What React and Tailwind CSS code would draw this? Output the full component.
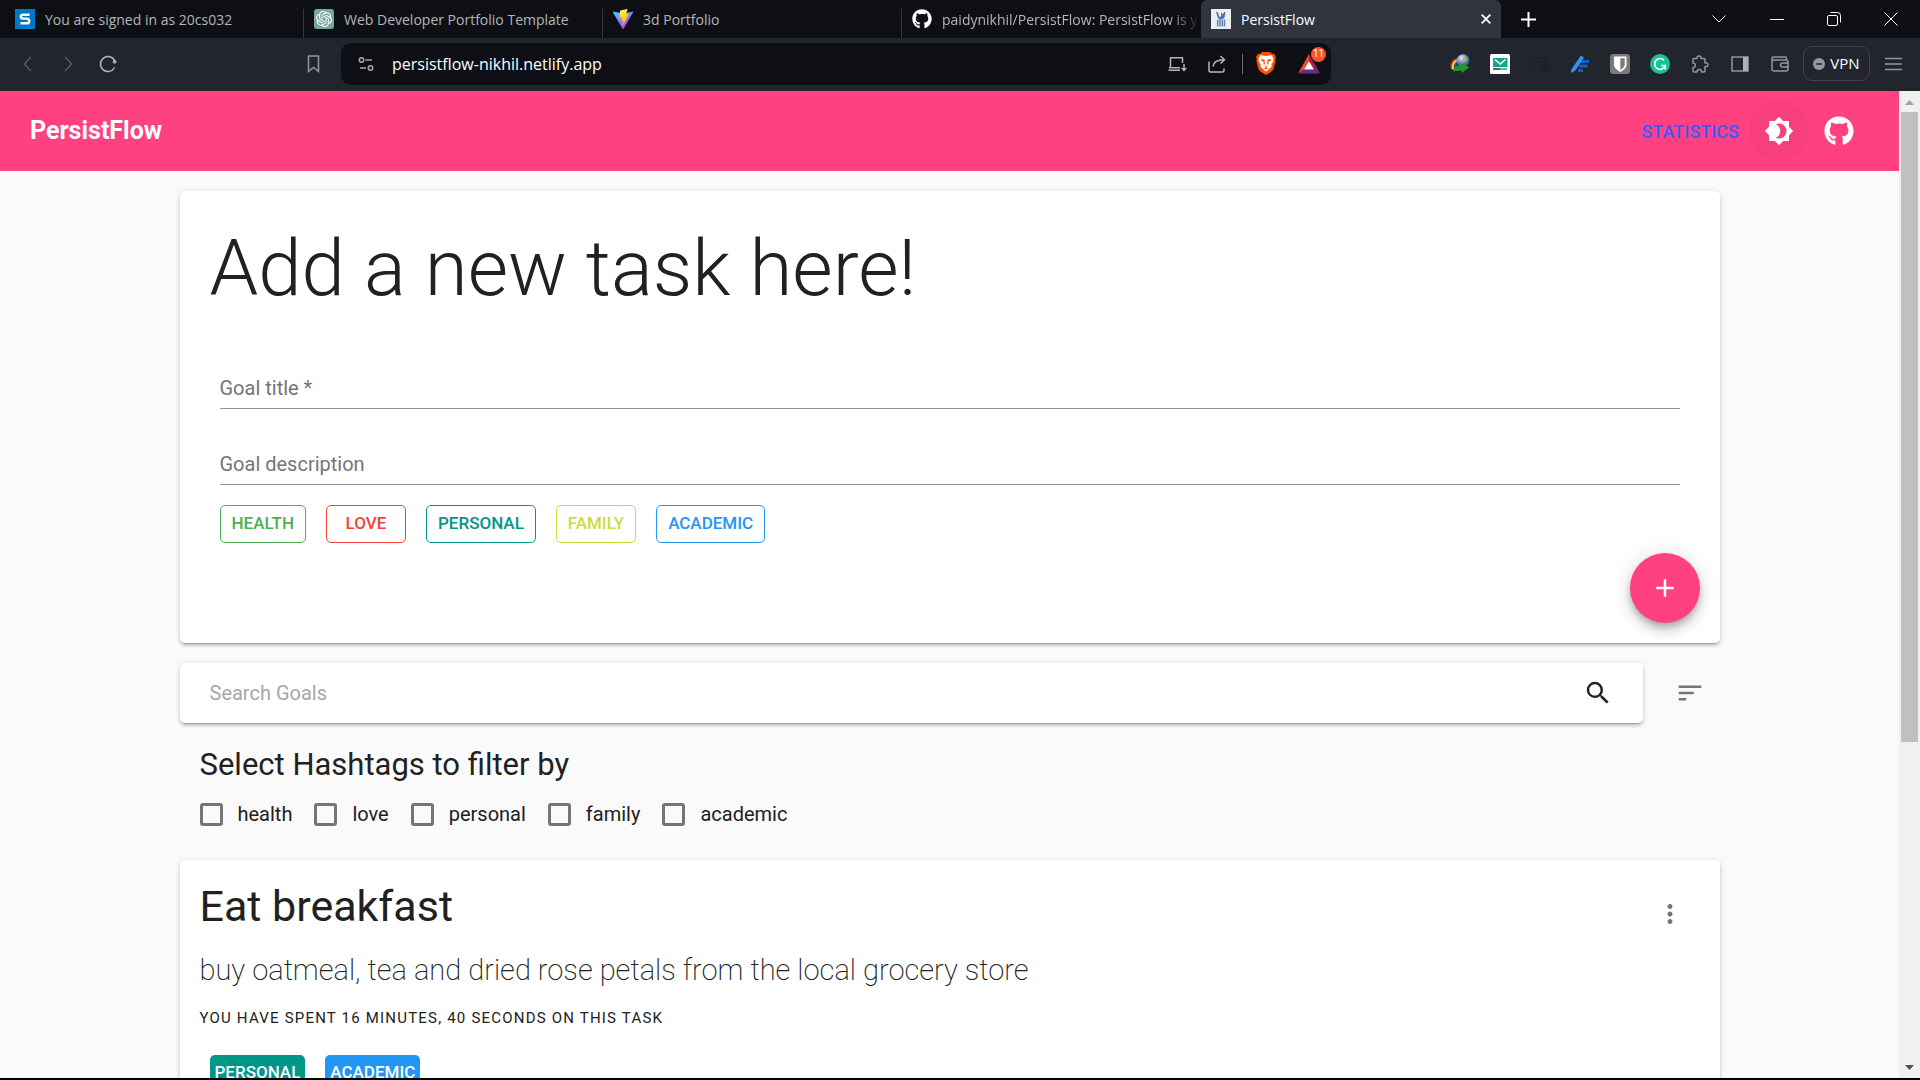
import React from "react";
import { FaGithub } from "react-icons/fa";
import { SiOpenai } from "react-icons/si";
import {
  MdAdd,
  MdBrightness4,
  MdMoreVert,
  MdSearch,
  MdSort,
} from "react-icons/md";

const ui = "font-['Open_Sans','Noto_Sans',sans-serif]";

function Vite() {
  return (
    <svg viewBox="0 0 32 32" className="size-5 shrink-0" aria-hidden="true">
      <defs>
        <linearGradient id="vite-a" x1="0" y1="0" x2="0.6" y2="1">
          <stop offset="0" stopColor="#41d1ff" />
          <stop offset="1" stopColor="#bd34fe" />
        </linearGradient>
        <linearGradient id="vite-b" x1="0.4" y1="0" x2="0.6" y2="1">
          <stop offset="0" stopColor="#ffea83" />
          <stop offset="0.3" stopColor="#ffdd35" />
          <stop offset="1" stopColor="#ffa800" />
        </linearGradient>
      </defs>
      <path fill="url(#vite-a)" d="M31.9 5.6 16.9 31.4a1 1 0 0 1-1.7 0L.1 5.6A1 1 0 0 1 1.1 4.2L16 6.8l14.9-2.6a1 1 0 0 1 1 1.4z" />
      <path fill="url(#vite-b)" d="M22.6.1 11.5 2.300a.4.4 0 0 0-.3.4l-.7 11.500a.4.4 0 0 0 .5.4l3.100-.7a.4.4 0 0 1 .5.5l-.9 4.500a.4.4 0 0 0 .5.5l1.900-.6a.4.4 0 0 1 .5.5l-1.500 7.100c-.1.4.5.7.8.3l.2-.2 9-18a.4.4 0 0 0-.4-.6l-3.200.6a.4.4 0 0 1-.4-.5l2.100-7.200a.4.4 0 0 0-.5-.5z" />
    </svg>
  );
}

const tabs = [
  {
    title: "You are signed in as 20cs032",
    icon: (
      <svg viewBox="0 0 20 20" className="size-5 shrink-0" aria-hidden="true">
        <path fill="#0078c8" d="M0 0h20v20H0z" />
        <path fill="none" stroke="#fff" strokeWidth="2.4" d="M14.5 5.700H8.200C6 5.700 5.800 7 5.800 7.600c0 1.500.8 2 2.200 2h4c1.500 0 2.200.8 2.200 2.300s-.8 2.400-2.400 2.400H5.500" />
      </svg>
    ),
  },
  {
    title: "Web Developer Portfolio Template",
    icon: (
      <span className="grid size-5 shrink-0 place-items-center rounded-[3px] bg-[#75a99c] text-white">
        <SiOpenai size={16} />
      </span>
    ),
  },
  { title: "3d Portfolio", icon: <Vite /> },
  {
    title: "paidynikhil/PersistFlow: PersistFlow is y",
    fade: true,
    icon: <FaGithub size={20} className="shrink-0 text-white" />,
  },
];

function Tab({ title, icon, fade }) {
  return (
    <button type="button" role="tab" className="flex h-full max-w-[299px] min-w-0 flex-1 items-center gap-[10px] pl-[10px] text-[#b4b5b8]">
      {icon}
      <span className={fade
        ? "min-w-0 flex-1 overflow-hidden text-left whitespace-nowrap [mask-image:linear-gradient(to_right,#000_88%,transparent)]"
        : "min-w-0 flex-1 overflow-hidden text-left whitespace-nowrap"}>
        {title}
      </span>
      <span className={fade ? "hidden" : "mt-[9px] w-px self-stretch bg-[#36373c]"} />
    </button>
  );
}

function TabStrip() {
  return (
    <div className={`${ui} flex h-[38px] items-stretch bg-[#0e0f14] pl-[5px] text-[14px]`}>
      <div role="tablist" className="flex min-w-0 flex-1">
        {tabs.map((t) => (
          <Tab key={t.title} {...t} />
        ))}
        <div className="flex h-full max-w-[300px] min-w-0 flex-1 items-center gap-[10px] rounded-t-md bg-[#30343d] px-[10px] text-white">
          <button type="button" role="tab" aria-selected="true" className="flex min-w-0 flex-1 items-center gap-[10px]">
            <svg viewBox="0 0 20 20" className="size-5 shrink-0" aria-hidden="true">
              <path fill="#eceff1" d="M0 0h20v20H0z" />
              <path fill="#4b74ac" d="M5 2.500l2 1 1.500 5L10 7V3l1.500 2.500L13.500 2.500l1 1-1 5-2 2H8L6.500 8z" />
              <path stroke="#5e84b6" strokeWidth="1.500" d="M6.700 10.500V17.500M9 11v6.500M11.300 11v6.500M13.500 10.500V17.500" />
            </svg>
            PersistFlow
          </button>
          <button type="button" aria-label="Close tab">
            <svg viewBox="0 0 10 10" className="size-[10px]" aria-hidden="true">
              <path d="M.7.7l8.600 8.600M9.300.7.7 9.300" stroke="#fff" strokeWidth="1.800" />
            </svg>
          </button>
        </div>
        <button type="button" aria-label="New tab" className="ml-5">
          <svg viewBox="0 0 15 15" className="size-[15px]" aria-hidden="true">
            <path d="M7.500 0v15M0 7.500h15" stroke="#fff" strokeWidth="2" />
          </svg>
        </button>
      </div>
      <div className="flex items-center text-white">
        <button type="button" aria-label="Search tabs" className="grid w-[58px] place-items-center">
          <svg viewBox="0 0 14 14" className="size-[14px]" fill="none" stroke="currentColor" aria-hidden="true">
            <path d="M.5 3.500 7 10l6.500-6.500" />
          </svg>
        </button>
        <button type="button" aria-label="Minimize" className="grid w-[57px] place-items-center">
          <svg viewBox="0 0 14 14" className="size-[14px]" aria-hidden="true">
            <path d="M0 7.500h14" stroke="currentColor" />
          </svg>
        </button>
        <button type="button" aria-label="Restore" className="grid w-[57px] place-items-center">
          <svg viewBox="0 0 14 14" className="size-[14px]" fill="none" stroke="currentColor" aria-hidden="true">
            <rect x=".5" y="3.500" width="10" height="10" rx="1.500" />
            <path d="M3.500.5h7q3 0 3 3v7" />
          </svg>
        </button>
        <button type="button" aria-label="Close" className="grid w-[58px] place-items-center">
          <svg viewBox="0 0 14 14" className="size-[14px]" stroke="currentColor" aria-hidden="true">
            <path d="M.5.5l13 13M13.500.5l-13 13" />
          </svg>
        </button>
      </div>
    </div>
  );
}

const iconButton = "grid h-10 w-10 shrink-0 place-items-center";

function Toolbar() {
  return (
    <div className={`${ui} flex h-[53px] items-center bg-[#22252d] pb-[2px] text-[#8f96a6]`}>
      <div className="flex w-[341px] shrink-0 items-center pr-2 pl-2">
        <button type="button" aria-label="Back" className={`${iconButton} text-[#555963]`}>
          <svg viewBox="0 0 16 16" className="size-4" fill="none" stroke="currentColor" strokeWidth="1.500" aria-hidden="true">
            <path d="M11 .8 4.500 8 11 15.200" />
          </svg>
        </button>
        <button type="button" aria-label="Forward" className={`${iconButton} text-[#555963]`}>
          <svg viewBox="0 0 16 16" className="size-4" fill="none" stroke="currentColor" strokeWidth="1.500" aria-hidden="true">
            <path d="M5 .8 11.500 8 5 15.200" />
          </svg>
        </button>
        <button type="button" aria-label="Reload" className={`${iconButton} text-[#a9b0be]`}>
          <svg viewBox="0 0 18 18" className="size-[18px]" fill="none" stroke="currentColor" strokeWidth="1.600" aria-hidden="true">
            <path d="M15.600 12.500A7.500 7.500 0 1 1 15.500 5.300" />
            <circle cx="15.600" cy="6.700" r="1.900" fill="currentColor" stroke="none" />
          </svg>
        </button>
        <button type="button" aria-label="Bookmark" className={`${iconButton} ml-auto`}>
          <svg viewBox="0 0 14 18" className="h-[18px] w-[14px]" fill="none" stroke="currentColor" strokeWidth="1.500" aria-hidden="true">
            <path d="M2.500 1h10v15.500l-5-4-5 4z" />
          </svg>
        </button>
      </div>
      <div className="flex h-[42px] min-w-0 flex-1 items-center rounded-[10px] bg-[#0e0f14] pl-[5px]">
        <button type="button" aria-label="Site settings" className={iconButton}>
          <svg viewBox="0 0 16 16" className="size-4" fill="none" stroke="#a7a8ab" strokeWidth="1.500" aria-hidden="true">
            <circle cx="3.500" cy="4" r="2.200" />
            <path d="M7.500 4H14M2 12h6" />
            <circle cx="12.500" cy="12" r="2.200" />
          </svg>
        </button>
        <input
          aria-label="Address"
          defaultValue="persistflow-nikhil.netlify.app"
          className="ml-[6px] min-w-0 flex-1 bg-transparent text-[16px] text-white outline-none"
        />
        <div className="flex items-center text-[#b4b5b8]">
          <button type="button" aria-label="Install" className={iconButton}>
            <svg viewBox="0 0 20 16" className="h-4 w-5" fill="none" stroke="currentColor" strokeWidth="1.500" aria-hidden="true">
              <path d="M15.500 7V1.700h-12v9.500M1.500 14.200h11.500M2 11.700h11" />
              <path d="M17 8v6M14.700 12l2.300 2.500 2.300-2.500" />
            </svg>
          </button>
          <button type="button" aria-label="Share" className={iconButton}>
            <svg viewBox="0 0 18 18" className="size-[18px]" fill="none" stroke="currentColor" strokeWidth="1.500" aria-hidden="true">
              <path d="M1 6.500v9q0 1.500 1.500 1.500h12q1.500 0 1.500-1.500V13.500M5 11.500C5.500 7 9 4.700 16 4.700M12.500 1l4 3.700-4 3.800" />
            </svg>
          </button>
          <span className="ml-[5px] h-5 w-px bg-[#6c6d70]" />
          <button type="button" aria-label="Brave Shields" className={`${iconButton} ml-[3px]`}>
            <svg viewBox="0 0 20 23" className="h-[23px] w-5" aria-hidden="true">
              <path fill="#ff5000" d="M6 0h8l2 2 2-.3L20 5l-.8 2 .4 2-2.200 8.500L15 20l-5 3-5-3-2.400-2.500L.4 9l.4-2L0 5l2-3.300L4 2z" />
              <path fill="#fff" d="M6.500 3.500 10 4l3.500-.5L15.500 3l2 3.500-.4 3-1.800 3 .5 1.500-1 1.500L10 19.800 5.200 15.500l-1-1.500.5-1.500-1.800-3-.4-3L4.500 3z" />
              <path fill="#ff5000" d="M5 7l3.800.8L8.500 9 9 12l-1.500 1 2.500 1 2.500-1L11 12l.5-3-.3-1.200L15 7l-.5 2-2 .5 0 2.500-2.500 3.500L7.500 12V9.500l-2-.5z" />
              <path fill="#ff5000" d="M8 16.500 10 15l2 1.500-2 1z" />
            </svg>
          </button>
          <button type="button" aria-label="Brave Rewards" className={`${iconButton} relative mr-[2px] ml-[3px]`}>
            <svg viewBox="0 0 22 20" className="h-5 w-[22px]" aria-hidden="true">
              <path fill="#ff4724" d="M11 0 0 19.500l6-4L11 7z" />
              <path fill="#9e1f63" d="M11 0v7l5 8.500 6 4z" />
              <path fill="#662d91" d="M0 19.500h22l-6-4H6z" />
              <path fill="#fff" d="m11 7 5 8.500H6z" />
            </svg>
            <span className="absolute top-[3px] right-[3px] grid size-[15px] place-items-center rounded-full bg-[#fb542b] font-['Roboto',sans-serif] text-[10px] leading-none text-white">
              11
            </span>
          </button>
        </div>
      </div>
      <div className="flex w-[589px] shrink-0 items-center justify-end pr-[7px]">
        <button type="button" aria-label="Download manager" className={iconButton}>
          <svg viewBox="0 0 20 20" className="size-5" aria-hidden="true">
            <defs>
              <radialGradient id="globe" cx=".4" cy=".3" r=".8">
                <stop offset="0" stopColor="#e3eefa" />
                <stop offset=".5" stopColor="#5f8fc7" />
                <stop offset="1" stopColor="#1d447c" />
              </radialGradient>
            </defs>
            <path d="M9 4.500C3 5 0 10 2 15" fill="none" stroke="#e03c1e" strokeWidth="1.500" />
            <path d="M9 6C4.500 6.500 2 10 3.200 15.500" fill="none" stroke="#f4d320" strokeWidth="2.200" />
            <path d="M10 8C6 8.500 4.500 11 5 15.500" fill="none" stroke="#2356a8" strokeWidth="2" />
            <circle cx="13" cy="6.500" r="6.300" fill="url(#globe)" />
            <path d="M13 3.500l4 .5-1 3.500-4-1z" fill="#c0b04a" />
            <path d="M3.500 17.500C4.500 13 7 11 10.500 11V9l9 4-7.500 6-.5-2.500c-3 0-5 1-8 1z" fill="#1d9a25" />
          </svg>
        </button>
        <button type="button" aria-label="Temp mail" className={iconButton}>
          <svg viewBox="0 0 20 20" className="size-5" aria-hidden="true">
            <rect width="20" height="20" rx="1.500" fill="#fff" />
            <path fill="#17a58c" d="M3 4h14.500v9H3z" />
            <path d="M5 5.500 10.200 10l5.300-4.500" fill="none" stroke="#fff" strokeWidth="1.500" />
            <path d="M3 15h7" stroke="#263238" strokeWidth="1.500" />
            <path d="M10 15h7" stroke="#17a58c" strokeWidth="1.500" />
          </svg>
        </button>
        <button type="button" aria-label="Reader" className={iconButton}>
          <svg viewBox="0 0 20 20" className="size-5" fill="none" stroke="#1f2127" strokeWidth="1.500" aria-hidden="true">
            <path d="M1 4h17M1 8h17M1 4v11h10" />
            <path d="M12 11h7v5h-7z" fill="#1f2127" />
          </svg>
        </button>
        <button type="button" aria-label="Highlighter" className={iconButton}>
          <svg viewBox="0 0 20 20" className="size-5" aria-hidden="true">
            <path d="M10 7.500h9M9 12h8.500M8 16.500h5" stroke="#1660c4" strokeWidth="2.800" />
            <path d="M3 16.500 12.500 2.500" stroke="#2b95f0" strokeWidth="4" />
            <path d="M.8 19l.8-4 3 2z" fill="#2b95f0" />
          </svg>
        </button>
        <button type="button" aria-label="Password manager" className={iconButton}>
          <svg viewBox="0 0 20 20" className="size-5" aria-hidden="true">
            <rect width="20" height="20" rx="3" fill="#7a7a7a" />
            <path fill="#fff" d="M4 2.500h12.500V11c0 3-3.200 5.300-6.200 7C7.200 16.300 4 14 4 11z" />
            <path fill="#7a7a7a" d="M10.300 4.200h4.400v6.500c0 2-2 3.700-4.400 5.200z" />
          </svg>
        </button>
        <button type="button" aria-label="Writing assistant" className={iconButton}>
          <svg viewBox="0 0 20 20" className="size-5" aria-hidden="true">
            <circle cx="10" cy="10" r="10" fill="#15c39a" />
            <path d="M14 6.200A5.400 5.400 0 1 0 15.200 11.500H11M15.200 11.500v4" fill="none" stroke="#fff" strokeWidth="1.700" />
          </svg>
        </button>
        <button type="button" aria-label="Extensions" className={iconButton}>
          <svg viewBox="0 0 18 18" className="size-[18px]" fill="none" stroke="currentColor" strokeWidth="1.500" strokeLinejoin="round" aria-hidden="true">
            <path d="M2 4.500Q2 3.500 3 3.500h3C5.500 2 6.500 1 8 1s2.500 1 2 2.500h3q1 0 1 1V8c1.700-.5 3 .3 3 1.800s-1.300 2.200-3 1.700V16q0 1-1 1h-2.500c.3-1.500-.7-2.500-2-2.500S5.700 15.500 6 17H3q-1 0-1-1v-3.500c1.500.3 2.300-.7 2.300-2.200S3.500 7.700 2 8z" />
          </svg>
        </button>
        <button type="button" aria-label="Side panel" className={iconButton}>
          <svg viewBox="0 0 18 16" className="h-4 w-[18px]" aria-hidden="true">
            <path fill="none" stroke="currentColor" strokeWidth="1.500" d="M1 1h16v14H1z" />
            <path fill="#a9b0be" d="M12 1h5v14h-5z" />
          </svg>
        </button>
        <button type="button" aria-label="Wallet" className={iconButton}>
          <svg viewBox="0 0 18 16" className="h-4 w-[18px]" fill="none" stroke="currentColor" strokeWidth="1.500" strokeLinejoin="round" aria-hidden="true">
            <path d="M1 2.500Q1 1 2.500 1H14q1.500 0 1.500 1.500V4M1 2.500Q1 4 2.500 4H15q2 0 2 2v7q0 2-2 2H3q-2 0-2-2zM17 7h-5q-2.500 0-2.500 2T12 11h5" />
          </svg>
        </button>
        <button type="button" className="ml-[3px] flex h-[35px] w-[67px] shrink-0 items-center justify-center gap-[5px] rounded-[9px] border border-[#3f434d] text-[15px] text-white">
          <svg viewBox="0 0 12 12" className="size-3" aria-hidden="true">
            <circle cx="6" cy="6" r="6" fill="#9296a8" />
            <path d="M3 6h6" stroke="#22252d" strokeWidth="1.500" />
          </svg>
          VPN
        </button>
        <button type="button" aria-label="Menu" className={`${iconButton} ml-[3px]`}>
          <svg viewBox="0 0 17 14" className="h-[14px] w-[17px]" stroke="currentColor" strokeWidth="1.500" aria-hidden="true">
            <path d="M0 1.500h17M0 7h17M0 12.500h17" />
          </svg>
        </button>
      </div>
    </div>
  );
}

const paper =
  "rounded-[5px] bg-white shadow-[0_4px_1px_-3px_rgba(0,0,0,0.2),0_3px_3px_0_rgba(0,0,0,0.14),0_1px_6px_0_rgba(0,0,0,0.12)]";

const categories = [
  { name: "Health", style: "border-[#4caf50] text-[#4caf50]" },
  { name: "Love", style: "border-[#f44336] text-[#f44336]" },
  { name: "Personal", style: "border-[#009688] text-[#009688]" },
  { name: "Family", style: "border-[#cddc39] text-[#cddc39]" },
  { name: "Academic", style: "border-[#2196f3] text-[#2196f3]" },
];

function Header() {
  return (
    <header className="flex h-20 items-center bg-[#ff4081] px-[30px] text-white">
      <h1 className="flex-1 text-[25px] font-bold">PersistFlow</h1>
      <a href="#statistics" className="px-[10px] text-[18px] font-medium text-[#3d5afe] uppercase">
        Statistics
      </a>
      <button type="button" aria-label="Toggle theme" className="grid size-[60px] place-items-center rounded-full bg-[#f73f7e]">
        <MdBrightness4 size={30} />
      </button>
      <a href="#github" aria-label="GitHub" className="grid size-[60px] place-items-center">
        <FaGithub size={30} />
      </a>
    </header>
  );
}

const fieldClass =
  "h-[42px] w-full border-b border-[#949494] bg-transparent text-[20px] leading-6 outline-none placeholder:text-[#757575]";

function NewTask() {
  return (
    <form className={`${paper} px-[30px] pt-[30px] pb-5`}>
      <h2 className="text-[78px] leading-[96px] font-light">Add a new task here!</h2>
      <div className="flex flex-col px-[10px] pt-[50px]">
        <input aria-label="Goal title" required placeholder="Goal title *" className={fieldClass} />
        <input aria-label="Goal description" placeholder="Goal description" className={`${fieldClass} mt-[34px]`} />
        <div className="mt-5 flex flex-wrap gap-5">
          {categories.map((c) => (
            <button
              key={c.name}
              type="button"
              className={`${c.style} h-[38px] min-w-20 rounded-[5px] border px-[11px] text-[17px] font-medium uppercase`}
            >
              {c.name}
            </button>
          ))}
        </div>
      </div>
      <div className="-mr-[10px] mt-[10px] flex justify-end">
        <button
          type="submit"
          aria-label="Add goal"
          className="grid size-[70px] place-items-center rounded-full bg-[#ff4081] text-white shadow-[0_4px_6px_-1px_rgba(0,0,0,0.2),0_8px_12px_0_rgba(0,0,0,0.14),0_1px_22px_0_rgba(0,0,0,0.12)]"
        >
          <MdAdd size={30} />
        </button>
      </div>
    </form>
  );
}

function SearchBar() {
  return (
    <div className="mt-5 flex items-center">
      <div className={`${paper} flex h-[60px] flex-1 items-center px-[30px]`}>
        <input aria-label="Search goals" placeholder="Search Goals" className="flex-1 bg-transparent text-[20px] leading-6 outline-none placeholder:text-[#a6a6a6]" />
        <button type="button" aria-label="Search">
          <MdSearch size={30} />
        </button>
      </div>
      <button type="button" aria-label="Sort" className="mr-[15px] ml-8 text-[#757575]">
        <MdSort size={30} />
      </button>
    </div>
  );
}

function Filters() {
  return (
    <fieldset className="mt-[22px] px-5">
      <legend className="text-[31px] leading-10">Select Hashtags to filter by</legend>
      <div className="mt-[14px] flex flex-wrap gap-[22px]">
        {categories.map((c) => (
          <label key={c.name} className="flex items-center gap-[15px] text-[20px] leading-[30px] lowercase">
            <input type="checkbox" className="size-[23px] appearance-none rounded-[3px] border-[3px] border-[#757575]" />
            {c.name}
          </label>
        ))}
      </div>
    </fieldset>
  );
}

function Goal() {
  return (
    <article className={`${paper} mt-[31px] flex px-5 pt-5`}>
      <div className="flex-1">
        <h3 className="text-[43px] leading-[52px]">Eat breakfast</h3>
        <p className="mt-[18px] text-[29px] leading-10 font-extralight">
          buy oatmeal, tea and dried rose petals from the local grocery store
        </p>
        <p className="mt-2 text-[15px] leading-10 tracking-[0.08em] uppercase">
          You have spent 16 minutes, 40 seconds on this task
        </p>
        <div className="mt-[17px] flex gap-5 px-[10px] text-[17px] font-medium text-white">
          <button type="button" className="h-9 rounded-[5px] bg-[#009688] px-[5px] uppercase">Personal</button>
          <button type="button" className="h-9 rounded-[5px] bg-[#2196f3] px-[5px] uppercase">Academic</button>
        </div>
      </div>
      <button type="button" aria-label="Goal options" className="mt-[19px] mr-[15px] self-start text-[#757575]">
        <MdMoreVert size={30} />
      </button>
    </article>
  );
}

function Scrollbar() {
  return (
    <div aria-hidden="true" className="flex w-[21px] shrink-0 flex-col items-center bg-[#f0f0f0]">
      <svg viewBox="0 0 21 21" className="size-[21px] shrink-0">
        <path d="M6 14h9l-4.500-5z" fill="#a3a3a3" />
      </svg>
      <div className="flex w-[17px] flex-1 flex-col">
        <div className="h-2/3 bg-[#c0c0c0]" />
      </div>
      <svg viewBox="0 0 21 21" className="size-[21px] shrink-0">
        <path d="M6 8h9l-4.500 5z" fill="#505050" />
      </svg>
    </div>
  );
}

export default function App() {
  return (
    <div className="flex h-screen flex-col overflow-hidden border-b-2 border-black bg-[#fafafa]">
      <TabStrip />
      <Toolbar />
      <div className="flex min-h-0 flex-1">
        <div className="flex-1 overflow-hidden font-['Roboto',sans-serif] text-[#212121]">
          <Header />
          <main className="mx-auto max-w-[1600px] px-[30px] pt-5">
            <NewTask />
            <SearchBar />
            <Filters />
            <Goal />
          </main>
        </div>
        <Scrollbar />
      </div>
    </div>
  );
}
